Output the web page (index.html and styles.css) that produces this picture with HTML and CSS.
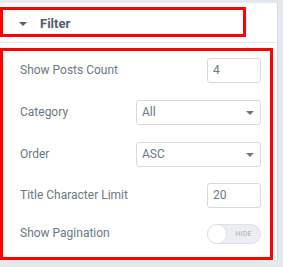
FILE: index.html
```html
<!DOCTYPE html>
<html>
  <head>
    <meta http-equiv="Content-Type" content="text/html; charset=utf-8" />
    <title>Filter</title>
    <link rel="stylesheet" href="styles.css">
  </head>
  <body>
    <div class="panel">
      <div class="section-head">
        <div class="marked head-box">
          <span class="caret"></span>
          <span class="section-title">Filter</span>
        </div>
      </div>
      <div class="section-body">
        <div class="marked controls">
          <div class="control">
            <span class="control-label">Show Posts Count</span>
            <div class="field field-number">4</div>
          </div>
          <div class="control">
            <span class="control-label">Category</span>
            <div class="field field-select">
              <span>All</span>
              <span class="select-caret"></span>
            </div>
          </div>
          <div class="control">
            <span class="control-label">Order</span>
            <div class="field field-select">
              <span>ASC</span>
              <span class="select-caret"></span>
            </div>
          </div>
          <div class="control">
            <span class="control-label">Title Character Limit</span>
            <div class="field field-number">20</div>
          </div>
          <div class="control control-switch">
            <span class="control-label">Show Pagination</span>
            <div class="switch">
              <span class="switch-knob"></span>
              <span class="switch-text">HIDE</span>
            </div>
          </div>
        </div>
      </div>
    </div>
  </body>
</html>
```

FILE: styles.css
```css
* {
  box-sizing: border-box;
}
html,
body {
  margin: 0;
  padding: 0;
}
body {
  background: #e6e9ec;
  font-family: Roboto, 'Liberation Sans', sans-serif;
  color: #6d7882;
}
.panel {
  width: 278px;
  height: 257px;
  margin-top: 3px;
  background: #fff;
  border-right: 1px solid #d5dadf;
}
.marked {
  border: 3px solid #ff0000;
}
.section-head {
  height: 40px;
  padding-top: 4px;
  border-bottom: 1px solid #e6e9ec;
}
.head-box {
  width: 246px;
  height: 30px;
  display: flex;
  align-items: center;
  padding: 3px 0 0 16px;
}
.caret {
  width: 0;
  height: 0;
  border-left: 4px solid transparent;
  border-right: 4px solid transparent;
  border-top: 4px solid #556068;
  margin-right: 13px;
}
.section-title {
  font-size: 13px;
  font-weight: bold;
  color: #556068;
}
.section-body {
  padding-top: 5px;
}
.controls {
  width: 273px;
  height: 212px;
  padding: 7px 9px 13px 17px;
  display: grid;
  grid-template-rows: 42px 42px 41px 41px 20px;
}
.control {
  display: flex;
  align-items: flex-start;
  justify-content: space-between;
}
.control-label {
  font-size: 12px;
  line-height: 25px;
}
.control-switch .control-label {
  line-height: 19px;
}
.field {
  height: 25px;
  border: 1px solid #d5dadf;
  border-radius: 3px;
  padding: 0 5px;
  font-size: 12px;
  line-height: 23px;
  color: #6d7882;
}
.field-number {
  width: 54px;
}
.field-select {
  width: 125px;
  display: flex;
  align-items: center;
  justify-content: space-between;
  padding-right: 6px;
}
.select-caret {
  width: 0;
  height: 0;
  border-left: 4px solid transparent;
  border-right: 4px solid transparent;
  border-top: 4px solid #6d7882;
}
.switch {
  width: 54px;
  height: 20px;
  border-radius: 10px;
  background: #eceef1;
  border: 1px solid #dfe2e6;
  display: flex;
  align-items: center;
}
.switch-knob {
  width: 20px;
  height: 20px;
  margin-left: -1px;
  border-radius: 50%;
  background: #fff;
  border: 1px solid #dfe2e6;
}
.switch-text {
  flex: 1;
  text-align: center;
  font-size: 7px;
  color: #a4afb7;
  letter-spacing: 0.2px;
}
```
